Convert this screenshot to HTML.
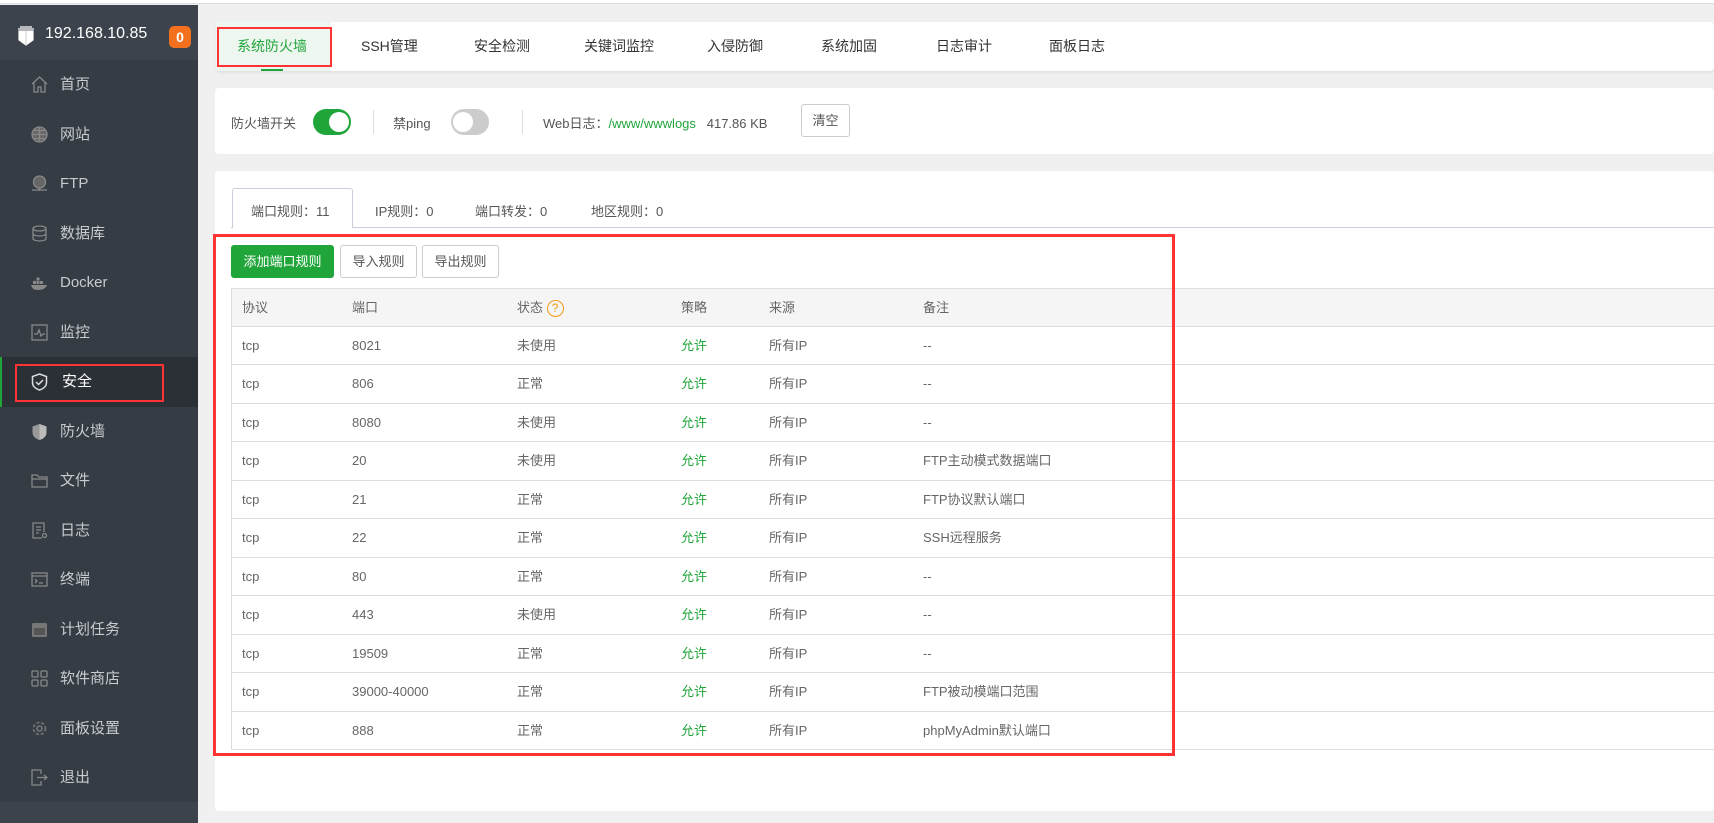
<!DOCTYPE html>
<html><head><meta charset="utf-8"><style>
*{margin:0;padding:0;box-sizing:border-box}
body{width:1714px;height:823px;overflow:hidden;background:#f0f0f0;font-family:"Liberation Sans","Noto Sans CJK SC",sans-serif;position:relative}
.a{position:absolute}
#top{left:0;top:0;width:1714px;height:4px;background:#fff;border-bottom:1px solid #ddd}
#side{left:0;top:5px;width:198px;height:818px;background:#3c434c}
#logo{left:0;top:5px;width:198px;height:55px;background:#3c434c}
#menu{left:0;top:60px;width:198px;height:742px;background:#353c44}
.mi{position:absolute;left:0;width:198px;height:49.5px;color:#c8cbd0;font-size:15px;line-height:49.5px;padding-left:60px}
.mi svg{position:absolute;left:31px;top:16px}
.card{background:#fff;border-radius:4px;position:absolute}
.tab{position:absolute;top:22px;height:49px;line-height:49px;font-size:14px;color:#333}
.tg{position:absolute;width:38px;height:26px;border-radius:13px}
.tg i{position:absolute;top:3px;width:20px;height:20px;border-radius:10px;background:#fff}
.btn{position:absolute;top:245px;height:33px;line-height:31px;font-size:13px;border:1px solid #ccc;border-radius:3px;color:#555;text-align:center;background:#fff}
.row{position:absolute;left:231px;width:1483px;height:38.5px;border-bottom:1px solid #ddd;font-size:13px;color:#666;line-height:38px}
.row span{position:absolute}
.c1{left:10px}.c2{left:120px}.c3{left:285px}.c4{left:449px}.c5{left:537px}.c6{left:691px}
.g{color:#20a53a}
</style></head><body>
<div class="a" id="top"></div>
<div class="a" id="side"></div>
<div class="a" id="logo">
<svg class="a" style="left:17px;top:21px" width="18" height="20" viewBox="0 0 18 20"><path d="M1 3h16M3 1h12M2 5h14v9l-7 5-7-5z" fill="#fff" stroke="#fff" stroke-width="1.2"/><path d="M9 5v14" stroke="#ccc" stroke-width="1"/></svg>
<div class="a" style="left:45px;top:20px;color:#fff;font-size:16px">192.168.10.85</div>
<div class="a" style="left:169px;top:21px;width:22px;height:22px;border-radius:5px;background:#f3701f;color:#fff;font-size:14px;font-weight:bold;text-align:center;line-height:22px">0</div>
</div>
<div class="a" id="menu">
<div class="mi" style="top:0"><svg width="17" height="17" viewBox="0 0 17 17" fill="none" stroke="#888" stroke-width="1.3"><path d="M1 8L8.5 1 16 8M3 6.5V16h4v-5h3v5h4V6.5"/></svg>首页</div>
<div class="mi" style="top:49.5px"><svg width="17" height="17" viewBox="0 0 17 17" fill="none" stroke="#888" stroke-width="1.3"><circle cx="8.5" cy="8.5" r="7.5" fill="#666"/><path d="M1 8.5h15M8.5 1v15M3 4.5h11M3 12.5h11"/></svg>网站</div>
<div class="mi" style="top:99px"><svg width="17" height="17" viewBox="0 0 17 17" fill="none" stroke="#888" stroke-width="1.3"><circle cx="8.5" cy="7" r="6" fill="#666"/><path d="M1 15h15M8.5 13v3"/></svg>FTP</div>
<div class="mi" style="top:148.5px"><svg width="17" height="17" viewBox="0 0 17 17" fill="none" stroke="#888" stroke-width="1.3"><ellipse cx="8.5" cy="3.5" rx="6.5" ry="2.5"/><path d="M2 3.5v10c0 1.5 3 2.5 6.5 2.5s6.5-1 6.5-2.5v-10M2 8.5c0 1.5 3 2.5 6.5 2.5S15 10 15 8.5"/></svg>数据库</div>
<div class="mi" style="top:198px"><svg width="17" height="17" viewBox="0 0 17 17" fill="#888"><rect x="2" y="7" width="3" height="3"/><rect x="5.5" y="7" width="3" height="3"/><rect x="9" y="7" width="3" height="3"/><rect x="5.5" y="3.5" width="3" height="3"/><path d="M0 11h16c-1 3-4 5-9 5S1 14 0 11z"/></svg>Docker</div>
<div class="mi" style="top:247.5px"><svg width="17" height="17" viewBox="0 0 17 17" fill="none" stroke="#888" stroke-width="1.3"><rect x="1" y="1" width="15" height="15"/><path d="M3 10h3l2-4 2 6 2-2h2"/></svg>监控</div>
<div class="mi" style="top:297px;background:#2b3037;color:#fff;border-left:2px solid #20a53a"><svg width="17" height="18" viewBox="0 0 17 18" fill="none" stroke="#ddd" stroke-width="1.5" style="left:29px"><path d="M8.5 1L15.5 3.5v6c0 4-3.5 6.5-7 7.5-3.5-1-7-3.5-7-7.5v-6z"/><path d="M5 9l2.5 2.5L12 7"/></svg>安全</div>
<div class="mi" style="top:346.5px"><svg width="17" height="18" viewBox="0 0 17 18"><path d="M8.5 1L15.5 3.5v6c0 4-3.5 6.5-7 7.5-3.5-1-7-3.5-7-7.5v-6z" fill="#999"/><path d="M8.5 1v16c3.5-1 7-3.5 7-7.5v-6z" fill="#bbb"/></svg>防火墙</div>
<div class="mi" style="top:396px"><svg width="17" height="17" viewBox="0 0 17 17" fill="none" stroke="#888" stroke-width="1.3"><path d="M1 3h5l2 2h8v10H1z"/><path d="M1 7h15"/></svg>文件</div>
<div class="mi" style="top:445.5px"><svg width="17" height="17" viewBox="0 0 17 17" fill="none" stroke="#888" stroke-width="1.3"><path d="M11 16H2V1h11v9"/><path d="M5 5h5M5 8h5M5 11h3"/><circle cx="13.5" cy="13.5" r="2"/></svg>日志</div>
<div class="mi" style="top:495px"><svg width="17" height="17" viewBox="0 0 17 17" fill="none" stroke="#888" stroke-width="1.3"><rect x="1" y="2" width="15" height="13"/><path d="M1 5h15M4 8l2 2-2 2M8 12h4"/></svg>终端</div>
<div class="mi" style="top:544.5px"><svg width="17" height="17" viewBox="0 0 17 17" fill="#777"><rect x="1" y="2" width="15" height="14" rx="1.5"/><path d="M3 7h11v7H3z" fill="#555"/></svg>计划任务</div>
<div class="mi" style="top:594px"><svg width="17" height="17" viewBox="0 0 17 17" fill="none" stroke="#888" stroke-width="1.3"><rect x="1" y="1" width="6" height="6" rx="1"/><rect x="10" y="1" width="6" height="6" rx="1"/><rect x="1" y="10" width="6" height="6" rx="1"/><rect x="10" y="10" width="6" height="6" rx="1"/></svg>软件商店</div>
<div class="mi" style="top:643.5px"><svg width="17" height="17" viewBox="0 0 17 17" fill="none" stroke="#777" stroke-width="1.6"><circle cx="8.5" cy="8.5" r="2.5"/><circle cx="8.5" cy="8.5" r="6" stroke-dasharray="3 2"/></svg>面板设置</div>
<div class="mi" style="top:693px"><svg width="17" height="17" viewBox="0 0 17 17" fill="none" stroke="#888" stroke-width="1.3"><path d="M10 5V1H1v15h9v-4M6 8.5h10M13 6l3 2.5-3 2.5"/></svg>退出</div>
</div>
<div class="a" style="left:15px;top:364px;width:149px;height:38px;border:2px solid #f33"></div>

<!-- tab card -->
<div class="card" style="left:216px;top:22px;width:1498px;height:49px;box-shadow:0 2px 2px #e2e2e2"></div>
<div class="a" style="left:216px;top:22px;width:115px;height:49px;background:#eef7ef"></div>
<div class="tab" style="left:237px;color:#20a53a">系统防火墙</div>
<div class="a" style="left:261px;top:69px;width:22px;height:2px;background:#20a53a"></div>
<div class="a" style="left:217px;top:27px;width:115px;height:40px;border:2px solid #f33"></div>
<div class="tab" style="left:361px">SSH管理</div>
<div class="tab" style="left:474px">安全检测</div>
<div class="tab" style="left:584px">关键词监控</div>
<div class="tab" style="left:707px">入侵防御</div>
<div class="tab" style="left:821px">系统加固</div>
<div class="tab" style="left:936px">日志审计</div>
<div class="tab" style="left:1049px">面板日志</div>

<!-- switch card -->
<div class="card" style="left:215px;top:88px;width:1499px;height:66px"></div>
<div class="a" style="left:231px;top:113px;font-size:13px;color:#555">防火墙开关</div>
<div class="tg" style="left:313px;top:109px;background:#20a53a"><i style="left:16px"></i></div>
<div class="a" style="left:373px;top:110px;width:1px;height:24px;background:#ddd"></div>
<div class="a" style="left:393px;top:113px;font-size:13px;color:#555">禁ping</div>
<div class="tg" style="left:451px;top:109px;background:#ccc"><i style="left:2px"></i></div>
<div class="a" style="left:522px;top:110px;width:1px;height:24px;background:#ddd"></div>
<div class="a" style="left:543px;top:113px;font-size:13px;color:#555">Web日志：<span class="g">/www/wwwlogs</span>&nbsp;&nbsp; 417.86 KB</div>
<div class="btn" style="left:801px;top:104px;width:49px;height:33px">清空</div>

<!-- main card -->
<div class="card" style="left:215px;top:171px;width:1499px;height:640px"></div>
<div class="a" style="left:231px;top:227px;width:1483px;height:1px;background:#ccd"></div>
<div class="a" style="left:232px;top:188px;width:121px;height:40px;background:#fff;border:1px solid #ccd;border-bottom:none;border-radius:3px 3px 0 0"></div>
<div class="a" style="left:251px;top:201px;font-size:13px;color:#555">端口规则：11</div>
<div class="a" style="left:375px;top:201px;font-size:13px;color:#555">IP规则：0</div>
<div class="a" style="left:475px;top:201px;font-size:13px;color:#555">端口转发：0</div>
<div class="a" style="left:591px;top:201px;font-size:13px;color:#555">地区规则：0</div>
<div class="btn" style="left:231px;width:103px;background:#20a53a;border-color:#20a53a;color:#fff">添加端口规则</div>
<div class="btn" style="left:340px;width:77px">导入规则</div>
<div class="btn" style="left:422px;width:77px">导出规则</div>

<div class="row" style="top:288px;background:#f5f5f5;border-top:1px solid #ddd;border-left:1px solid #ddd"><span class="c1">协议</span><span class="c2">端口</span><span class="c3">状态 <b style="display:inline-block;width:17px;height:17px;border:1.5px solid #f39c12;border-radius:50%;color:#f39c12;font-size:12px;line-height:14px;text-align:center;font-weight:normal;vertical-align:middle">?</b></span><span class="c4">策略</span><span class="c5">来源</span><span class="c6">备注</span></div>
<div class="row" style="top:326.5px;border-left:1px solid #ddd"><span class="c1">tcp</span><span class="c2">8021</span><span class="c3">未使用</span><span class="c4 g">允许</span><span class="c5">所有IP</span><span class="c6">--</span></div>
<div class="row" style="top:365px;border-left:1px solid #ddd"><span class="c1">tcp</span><span class="c2">806</span><span class="c3">正常</span><span class="c4 g">允许</span><span class="c5">所有IP</span><span class="c6">--</span></div>
<div class="row" style="top:403.5px;border-left:1px solid #ddd"><span class="c1">tcp</span><span class="c2">8080</span><span class="c3">未使用</span><span class="c4 g">允许</span><span class="c5">所有IP</span><span class="c6">--</span></div>
<div class="row" style="top:442px;border-left:1px solid #ddd"><span class="c1">tcp</span><span class="c2">20</span><span class="c3">未使用</span><span class="c4 g">允许</span><span class="c5">所有IP</span><span class="c6">FTP主动模式数据端口</span></div>
<div class="row" style="top:480.5px;border-left:1px solid #ddd"><span class="c1">tcp</span><span class="c2">21</span><span class="c3">正常</span><span class="c4 g">允许</span><span class="c5">所有IP</span><span class="c6">FTP协议默认端口</span></div>
<div class="row" style="top:519px;border-left:1px solid #ddd"><span class="c1">tcp</span><span class="c2">22</span><span class="c3">正常</span><span class="c4 g">允许</span><span class="c5">所有IP</span><span class="c6">SSH远程服务</span></div>
<div class="row" style="top:557.5px;border-left:1px solid #ddd"><span class="c1">tcp</span><span class="c2">80</span><span class="c3">正常</span><span class="c4 g">允许</span><span class="c5">所有IP</span><span class="c6">--</span></div>
<div class="row" style="top:596px;border-left:1px solid #ddd"><span class="c1">tcp</span><span class="c2">443</span><span class="c3">未使用</span><span class="c4 g">允许</span><span class="c5">所有IP</span><span class="c6">--</span></div>
<div class="row" style="top:634.5px;border-left:1px solid #ddd"><span class="c1">tcp</span><span class="c2">19509</span><span class="c3">正常</span><span class="c4 g">允许</span><span class="c5">所有IP</span><span class="c6">--</span></div>
<div class="row" style="top:673px;border-left:1px solid #ddd"><span class="c1">tcp</span><span class="c2">39000-40000</span><span class="c3">正常</span><span class="c4 g">允许</span><span class="c5">所有IP</span><span class="c6">FTP被动模端口范围</span></div>
<div class="row" style="top:711.5px;border-left:1px solid #ddd"><span class="c1">tcp</span><span class="c2">888</span><span class="c3">正常</span><span class="c4 g">允许</span><span class="c5">所有IP</span><span class="c6">phpMyAdmin默认端口</span></div>
<div class="a" style="left:213px;top:234px;width:962px;height:522px;border:3px solid #f33"></div>
</body></html>
